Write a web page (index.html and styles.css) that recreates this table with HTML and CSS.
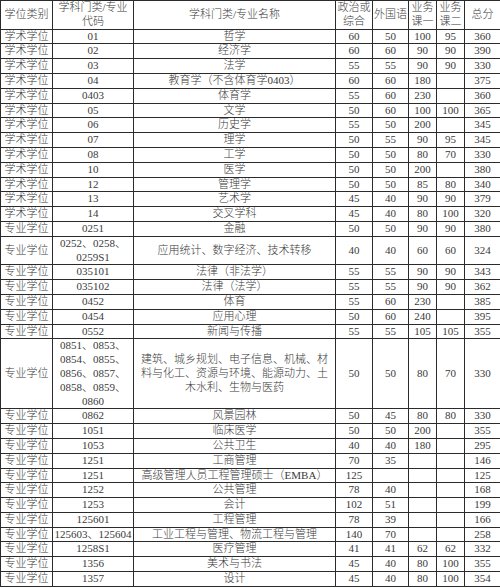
FILE: index.html
```html
<!DOCTYPE html>
<html lang="zh-CN">
<head>
<meta charset="utf-8">
<title>复试基本分数线</title>
<link rel="stylesheet" href="styles.css">
</head>
<body>
<table class="grid">
  <colgroup>
    <col class="c-type">
    <col class="c-code">
    <col class="c-name">
    <col class="c-pol">
    <col class="c-lang">
    <col class="c-s1">
    <col class="c-s2">
    <col class="c-total">
  </colgroup>
  <thead>
    <tr>
      <th>学位类别</th>
      <th>学科门类/专业代码</th>
      <th>学科门类/专业名称</th>
      <th>政治或综合</th>
      <th>外国语</th>
      <th>业务课一</th>
      <th>业务课二</th>
      <th>总分</th>
    </tr>
  </thead>
  <tbody>
    <tr><td>学术学位</td><td>01</td><td>哲学</td><td>60</td><td>50</td><td>100</td><td>95</td><td>360</td></tr>
    <tr><td>学术学位</td><td>02</td><td>经济学</td><td>60</td><td>60</td><td>90</td><td>90</td><td>390</td></tr>
    <tr><td>学术学位</td><td>03</td><td>法学</td><td>55</td><td>55</td><td>90</td><td>90</td><td>330</td></tr>
    <tr><td>学术学位</td><td>04</td><td>教育学（不含体育学0403）</td><td>60</td><td>60</td><td>180</td><td></td><td>375</td></tr>
    <tr><td>学术学位</td><td>0403</td><td>体育学</td><td>55</td><td>60</td><td>230</td><td></td><td>360</td></tr>
    <tr><td>学术学位</td><td>05</td><td>文学</td><td>50</td><td>60</td><td>100</td><td>100</td><td>365</td></tr>
    <tr><td>学术学位</td><td>06</td><td>历史学</td><td>55</td><td>50</td><td>200</td><td></td><td>345</td></tr>
    <tr><td>学术学位</td><td>07</td><td>理学</td><td>50</td><td>55</td><td>90</td><td>95</td><td>345</td></tr>
    <tr><td>学术学位</td><td>08</td><td>工学</td><td>50</td><td>50</td><td>80</td><td>70</td><td>330</td></tr>
    <tr><td>学术学位</td><td>10</td><td>医学</td><td>50</td><td>50</td><td>200</td><td></td><td>380</td></tr>
    <tr><td>学术学位</td><td>12</td><td>管理学</td><td>50</td><td>50</td><td>85</td><td>80</td><td>340</td></tr>
    <tr><td>学术学位</td><td>13</td><td>艺术学</td><td>45</td><td>40</td><td>90</td><td>90</td><td>379</td></tr>
    <tr><td>学术学位</td><td>14</td><td>交叉学科</td><td>45</td><td>40</td><td>80</td><td>100</td><td>320</td></tr>
    <tr><td>专业学位</td><td>0251</td><td>金融</td><td>50</td><td>50</td><td>90</td><td>90</td><td>380</td></tr>
    <tr><td>专业学位</td><td>0252、0258、0259S1</td><td>应用统计、数字经济、技术转移</td><td>40</td><td>40</td><td>60</td><td>60</td><td>324</td></tr>
    <tr><td>专业学位</td><td>035101</td><td>法律（非法学）</td><td>55</td><td>55</td><td>90</td><td>90</td><td>343</td></tr>
    <tr><td>专业学位</td><td>035102</td><td>法律（法学）</td><td>55</td><td>55</td><td>90</td><td>90</td><td>362</td></tr>
    <tr><td>专业学位</td><td>0452</td><td>体育</td><td>55</td><td>60</td><td>230</td><td></td><td>385</td></tr>
    <tr><td>专业学位</td><td>0454</td><td>应用心理</td><td>50</td><td>60</td><td>240</td><td></td><td>395</td></tr>
    <tr><td>专业学位</td><td>0552</td><td>新闻与传播</td><td>55</td><td>55</td><td>105</td><td>105</td><td>355</td></tr>
    <tr><td>专业学位</td><td>0851、0853、0854、0855、0856、0857、0858、0859、0860</td><td>建筑、城乡规划、电子信息、机械、材料与化工、资源与环境、能源动力、土木水利、生物与医药</td><td>50</td><td>50</td><td>80</td><td>70</td><td>330</td></tr>
    <tr><td>专业学位</td><td>0862</td><td>风景园林</td><td>50</td><td>45</td><td>80</td><td>80</td><td>330</td></tr>
    <tr><td>专业学位</td><td>1051</td><td>临床医学</td><td>50</td><td>50</td><td>200</td><td></td><td>355</td></tr>
    <tr><td>专业学位</td><td>1053</td><td>公共卫生</td><td>40</td><td>40</td><td>180</td><td></td><td>295</td></tr>
    <tr><td>专业学位</td><td>1251</td><td>工商管理</td><td>70</td><td>35</td><td></td><td></td><td>146</td></tr>
    <tr><td>专业学位</td><td>1251</td><td>高级管理人员工程管理硕士（EMBA）</td><td>125</td><td></td><td></td><td></td><td>125</td></tr>
    <tr><td>专业学位</td><td>1252</td><td>公共管理</td><td>78</td><td>40</td><td></td><td></td><td>168</td></tr>
    <tr><td>专业学位</td><td>1253</td><td>会计</td><td>102</td><td>51</td><td></td><td></td><td>199</td></tr>
    <tr><td>专业学位</td><td>125601</td><td>工程管理</td><td>78</td><td>39</td><td></td><td></td><td>166</td></tr>
    <tr><td>专业学位</td><td>125603、125604</td><td>工业工程与管理、物流工程与管理</td><td>140</td><td>70</td><td></td><td></td><td>258</td></tr>
    <tr><td>专业学位</td><td>1258S1</td><td>医疗管理</td><td>41</td><td>41</td><td>62</td><td>62</td><td>332</td></tr>
    <tr><td>专业学位</td><td>1356</td><td>美术与书法</td><td>45</td><td>40</td><td>80</td><td>100</td><td>355</td></tr>
    <tr><td>专业学位</td><td>1357</td><td>设计</td><td>45</td><td>40</td><td>80</td><td>100</td><td>354</td></tr>
  </tbody>
</table>
</body>
</html>
```

FILE: styles.css
```css
html, body {
  margin: 0;
  padding: 0;
  background: #ffffff;
}

.grid {
  border-collapse: collapse;
  table-layout: fixed;
  width: 500px;
  font-family: "Liberation Serif", "Noto Sans CJK SC", serif;
  font-size: 11px;
  font-weight: 300;
  line-height: 13.8px;
  color: #3a3a3a;
}

.c-type { width: 52px; }
.c-code { width: 81px; }
.c-name { width: 202px; }
.c-pol { width: 37px; }
.c-lang { width: 36px; }
.c-s1 { width: 28px; }
.c-s2 { width: 28px; }
.c-total { width: 36px; }

.grid th,
.grid td {
  border: 1px solid #2b2b2b;
  padding: 0 1px;
  text-align: center;
  vertical-align: middle;
  font-weight: 300;
}

.grid th {
  padding: 0;
}

.grid td:nth-child(3),
.grid th:nth-child(3) {
  padding: 0 5px;
}
```
